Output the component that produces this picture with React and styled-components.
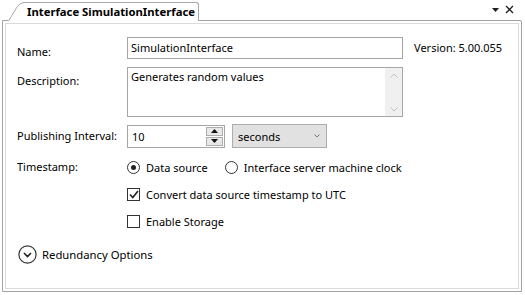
import styled, { createGlobalStyle } from "styled-components"

const Global = createGlobalStyle`
  html, body {
    margin: 0;
    padding: 0;
    background: #ffffff;
  }
  body {
    font-family: "Noto Sans", "Open Sans", sans-serif;
    font-size: 11px;
    color: #000;
  }
`;

const Page = styled.div`
  width: 525px;
  height: 295px;
  box-sizing: border-box;
  padding: 2px 3px 3px 2px;
  display: flex;
  flex-direction: column;
`;

const TabStrip = styled.div`
  height: 19px;
  display: flex;
  align-items: flex-end;
  padding-left: 6px;
  margin-bottom: -1px;
  position: relative;
  z-index: 1;
`;

const TabBody = styled.div`
  height: 18px;
  background: #fff;
  border-top: 1px solid #a9a9a9;
  border-right: 1px solid #a9a9a9;
  border-top-right-radius: 3px;
  padding: 0 3px 0 3px;
  font-weight: 700;
  font-size: 11.3px;
  line-height: 18px;
  white-space: nowrap;
`;

const Controls = styled.div`
  margin-left: auto;
  align-self: flex-start;
  display: flex;
  align-items: center;
  gap: 6px;
  padding: 3px 8px 0 0;
`;

const Panel = styled.div`
  flex: 1;
  border: 1px solid #a3a3a3;
  border-top-right-radius: 2px;
  box-shadow: inset 0 0 0 2px #fff, inset 0 0 0 3px #dadada;
  background: #fff;
  padding: 16px 0 0 14px;
  display: grid;
  grid-template-columns: 110px 276px auto;
  grid-auto-rows: min-content;
  align-items: start;
`;

const Label = styled.div`
  line-height: ${p => p.$h || 22}px;
  padding-top: ${p => p.$top || 0}px;
  margin-top: ${p => p.$mt || 0}px;
  white-space: nowrap;
`;

const TextBox = styled.div`
  height: 22px;
  box-sizing: border-box;
  border: 1px solid #a6a6a6;
  padding: 0 3px;
  line-height: 20px;
`;

const TextArea = styled.div`
  height: 50px;
  margin-top: 8px;
  box-sizing: border-box;
  border: 1px solid #a6a6a6;
  display: flex;
`;

const AreaText = styled.div`
  flex: 1;
  padding: 1px 3px;
  line-height: 16px;
`;

const ScrollBar = styled.div`
  width: 17px;
  background: #f0f0f0;
  display: flex;
  flex-direction: column;
  justify-content: space-between;
  align-items: center;
  padding: 5px 0 4px;
  box-sizing: border-box;
`;

const Version = styled.div`
  line-height: 22px;
  padding-left: 11px;
  white-space: nowrap;
`;

const Row = styled.div`
  grid-column: 2 / 4;
  display: flex;
  align-items: center;
  gap: ${p => p.$gap || 7}px;
  margin-top: ${p => p.$mt || 0}px;
  height: 22px;
`;

const Spinner = styled.div`
  width: 98px;
  height: 23px;
  box-sizing: border-box;
  border: 1px solid #a6a6a6;
  display: flex;
  align-items: center;
  padding-left: 4px;
`;

const SpinValue = styled.div`
  flex: 1;
`;

const SpinButtons = styled.div`
  width: 17px;
  height: 19px;
  margin-right: 1px;
  display: flex;
  flex-direction: column;
  gap: 1px;
`;

const SpinBtn = styled.div`
  flex: 1;
  border: 1px solid #adadad;
  background: #e8e8e8;
  display: flex;
  align-items: center;
  justify-content: center;
`;

const Select = styled.div`
  width: 95px;
  height: 24px;
  box-sizing: border-box;
  border: 1px solid #adadad;
  background: #e1e1e1;
  display: flex;
  align-items: center;
  justify-content: space-between;
  padding: 0 6px 0 5px;
`;

const Option = styled.div`
  display: flex;
  align-items: center;
  gap: 6px;
  margin-right: ${p => p.$mr || 0}px;
  white-space: nowrap;
`;

const Radio = styled.div`
  width: 11px;
  height: 11px;
  border: 1px solid #333;
  border-radius: 50%;
  display: flex;
  align-items: center;
  justify-content: center;
  &::after {
    content: "";
    width: 5px;
    height: 5px;
    border-radius: 50%;
    background: ${p => (p.$on ? "#222" : "transparent")};
  }
`;

const Box = styled.div`
  width: 11px;
  height: 11px;
  border: 1px solid #333;
  display: flex;
  align-items: center;
  justify-content: center;
`;

const Expander = styled.div`
  grid-column: 1 / 4;
  display: flex;
  align-items: center;
  gap: 5px;
  margin: 13px 0 0 1px;
  font-size: 11.3px;
`;

const Chevron = ({ up }) => (
  <svg width="8" height="5" viewBox="0 0 8 5">
    <path d={up ? "M0.5 4.5 L4 1 L7.5 4.5" : "M0.5 0.5 L4 4 L7.5 0.5"} fill="none" stroke="#c2c2c2" strokeWidth="1" />
  </svg>
);

const Tri = ({ up }) => (
  <svg width="7" height="4" viewBox="0 0 7 4">
    <path d={up ? "M0 4 L3.5 0 L7 4 Z" : "M0 0 L7 0 L3.5 4 Z"} fill="#111" />
  </svg>
);

const App = () => (
  <Page>
    <Global />
    <TabStrip>
      <svg width="16" height="19" viewBox="0 0 16 19" style={{ display: "block" }}>
        <path d="M0 19 L9 5 Q12 0.5 16 0.5 L16 19 Z" fill="#fff" />
        <path d="M0.5 19 L9 5 Q12 0.5 16 0.5" fill="none" stroke="#a9a9a9" strokeWidth="1" />
      </svg>
      <TabBody>Interface SimulationInterface</TabBody>
      <Controls>
        <svg width="7" height="4" viewBox="0 0 7 4">
          <path d="M0 0 L7 0 L3.5 4 Z" fill="#1e1e1e" />
        </svg>
        <svg width="9" height="9" viewBox="0 0 9 9">
          <path d="M1 1 L8 8 M8 1 L1 8" stroke="#1e1e1e" strokeWidth="1.3" />
        </svg>
      </Controls>
    </TabStrip>
    <Panel>
      <Label $top={8} $h={14}>Name:</Label>
      <TextBox>SimulationInterface</TextBox>
      <Version>Version: 5.00.055</Version>

      <Label $top={14} $h={16}>Description:</Label>
      <TextArea>
        <AreaText>Generates random values</AreaText>
        <ScrollBar>
          <Chevron up />
          <Chevron />
        </ScrollBar>
      </TextArea>
      <div />

      <Label $mt={8}>Publishing Interval:</Label>
      <Row $mt={8}>
        <Spinner>
          <SpinValue>10</SpinValue>
          <SpinButtons>
            <SpinBtn><Tri up /></SpinBtn>
            <SpinBtn><Tri /></SpinBtn>
          </SpinButtons>
        </Spinner>
        <Select>
          <span>seconds</span>
          <svg width="6" height="4" viewBox="0 0 6 4">
            <path d="M0.5 0.5 L3 3 L5.5 0.5" fill="none" stroke="#777" strokeWidth="1" />
          </svg>
        </Select>
      </Row>

      <Label $mt={9}>Timestamp:</Label>
      <Row $mt={9}>
        <Option $mr={10}><Radio $on />Data source</Option>
        <Option><Radio />Interface server machine clock</Option>
      </Row>

      <div />
      <Row $mt={5}>
        <Option>
          <Box>
            <svg width="10" height="9" viewBox="0 0 10 9">
              <path d="M1 4.5 L3.8 7.5 L9 1" fill="none" stroke="#222" strokeWidth="1.6" />
            </svg>
          </Box>
          Convert data source timestamp to UTC
        </Option>
      </Row>

      <div />
      <Row $mt={5}>
        <Option><Box />Enable Storage</Option>
      </Row>

      <Expander>
        <svg width="19" height="19" viewBox="0 0 19 19">
          <circle cx="9.5" cy="9.5" r="8.6" fill="none" stroke="#333" strokeWidth="1.2" />
          <path d="M6 8 L9.5 11.5 L13 8" fill="none" stroke="#222" strokeWidth="1.6" />
        </svg>
        Redundancy Options
      </Expander>
    </Panel>
  </Page>
);

export default App;
